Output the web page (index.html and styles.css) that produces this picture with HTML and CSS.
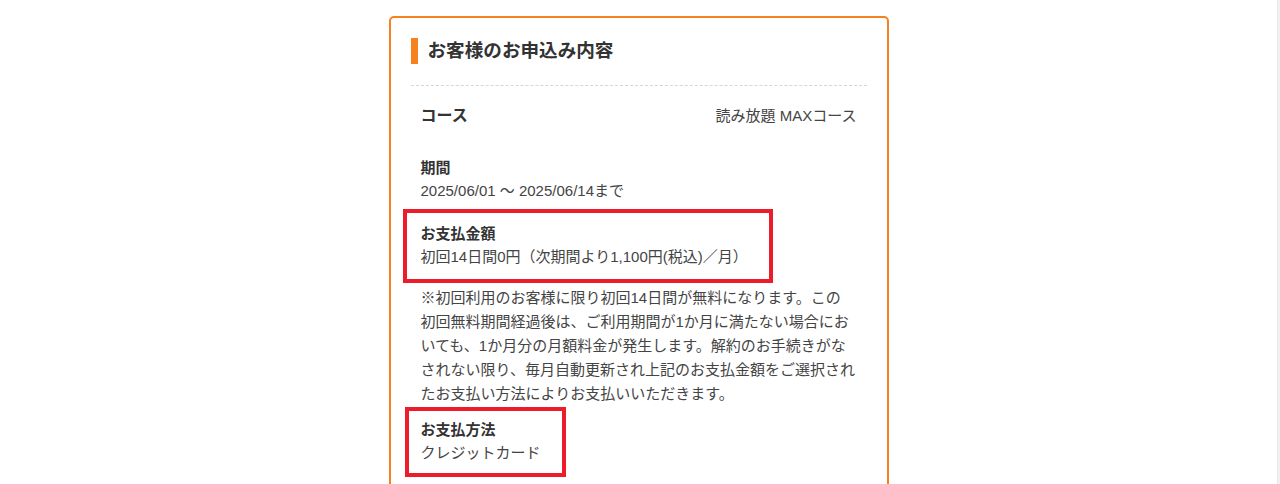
FILE: index.html
```html
<!DOCTYPE html>
<html lang="ja">
<head>
<meta charset="utf-8">
<title>お客様のお申込み内容</title>
<link rel="stylesheet" href="styles.css">
</head>
<body>
<div class="page">
  <main class="main">
    <section class="card">
      <div class="title-wrap">
        <h2 class="card-title">お客様のお申込み内容</h2>
      </div>
      <div class="course-row">
        <span class="course-label">コース</span>
        <span class="course-value">読み放題 MAXコース</span>
      </div>
      <div class="detail detail-period">
        <div class="detail-label">期間</div>
        <div class="detail-value">2025/06/01 〜 2025/06/14まで</div>
      </div>
      <div class="detail detail-amount marked marked-amount">
        <div class="detail-label">お支払金額</div>
        <div class="detail-value">初回14日間0円（次期間より1,100円(税込)／月）</div>
      </div>
      <p class="note">※初回利用のお客様に限り初回14日間が無料になります。この初回無料期間経過後は、ご利用期間が1か月に満たない場合においても、1か月分の月額料金が発生します。解約のお手続きがなされない限り、毎月自動更新され上記のお支払金額をご選択されたお支払い方法によりお支払いいただきます。</p>
      <div class="detail detail-method marked marked-method">
        <div class="detail-label">お支払方法</div>
        <div class="detail-value">クレジットカード</div>
      </div>
    </section>
  </main>
  <div class="scroll-edge"></div>
</div>
</body>
</html>
```

FILE: styles.css
```css
*,
*::before,
*::after {
  box-sizing: border-box;
}

html, body {
  margin: 0;
  padding: 0;
  background: #fff;
  height: 100%;
  overflow: hidden;
}

body {
  font-family: "Liberation Sans", "Noto Sans CJK JP", sans-serif;
  color: #333;
}

.page {
  display: flex;
  height: 100%;
}

.main {
  flex: 1;
  display: flex;
  justify-content: center;
  align-items: flex-start;
  padding-top: 16px;
}

.scroll-edge {
  width: 3px;
  background: #f0f1f1;
  border-left: 1px solid #e6e8e8;
}

.card {
  width: 500px;
  min-height: 600px;
  border: 2px solid #f5821f;
  border-radius: 5px;
  padding: 20px 20px 0;
  background: #fff;
}

.title-wrap {
  padding-bottom: 21px;
  border-bottom: 1px dashed #d6d6d6;
}

.card-title {
  margin: 0;
  border-left: 7px solid #f5821f;
  padding-left: 10px;
  font-size: 18.6px;
  line-height: 26px;
  font-weight: bold;
  color: #333;
}

.course-row {
  display: flex;
  justify-content: space-between;
  align-items: center;
  padding: 20px 10px;
  line-height: 20px;
}

.course-label {
  font-size: 16px;
  font-weight: bold;
  color: #333;
}

.course-value {
  font-size: 15px;
  color: #444;
}

.detail {
  padding: 0 10px;
  font-size: 15px;
  line-height: 23px;
}

.detail-label {
  font-weight: bold;
  font-size: 15px;
  color: #333;
}

.detail-value {
  color: #444;
}

.detail-period {
  margin-top: 10px;
}

.detail-amount {
  margin-top: 20px;
}

.note {
  margin: 18px 0 0;
  padding: 0 11px 0 10px;
  font-size: 15px;
  line-height: 24px;
  color: #444;
}

.detail-method {
  margin-top: 12px;
}

.marked {
  position: relative;
}

.marked::after {
  content: "";
  position: absolute;
  border: 4px solid #ec1c2b;
  pointer-events: none;
}

.marked-amount::after {
  top: -13px;
  left: -8px;
  width: 370px;
  height: 74px;
}

.marked-method::after {
  top: -11px;
  left: -6px;
  width: 161px;
  height: 70px;
}
```
